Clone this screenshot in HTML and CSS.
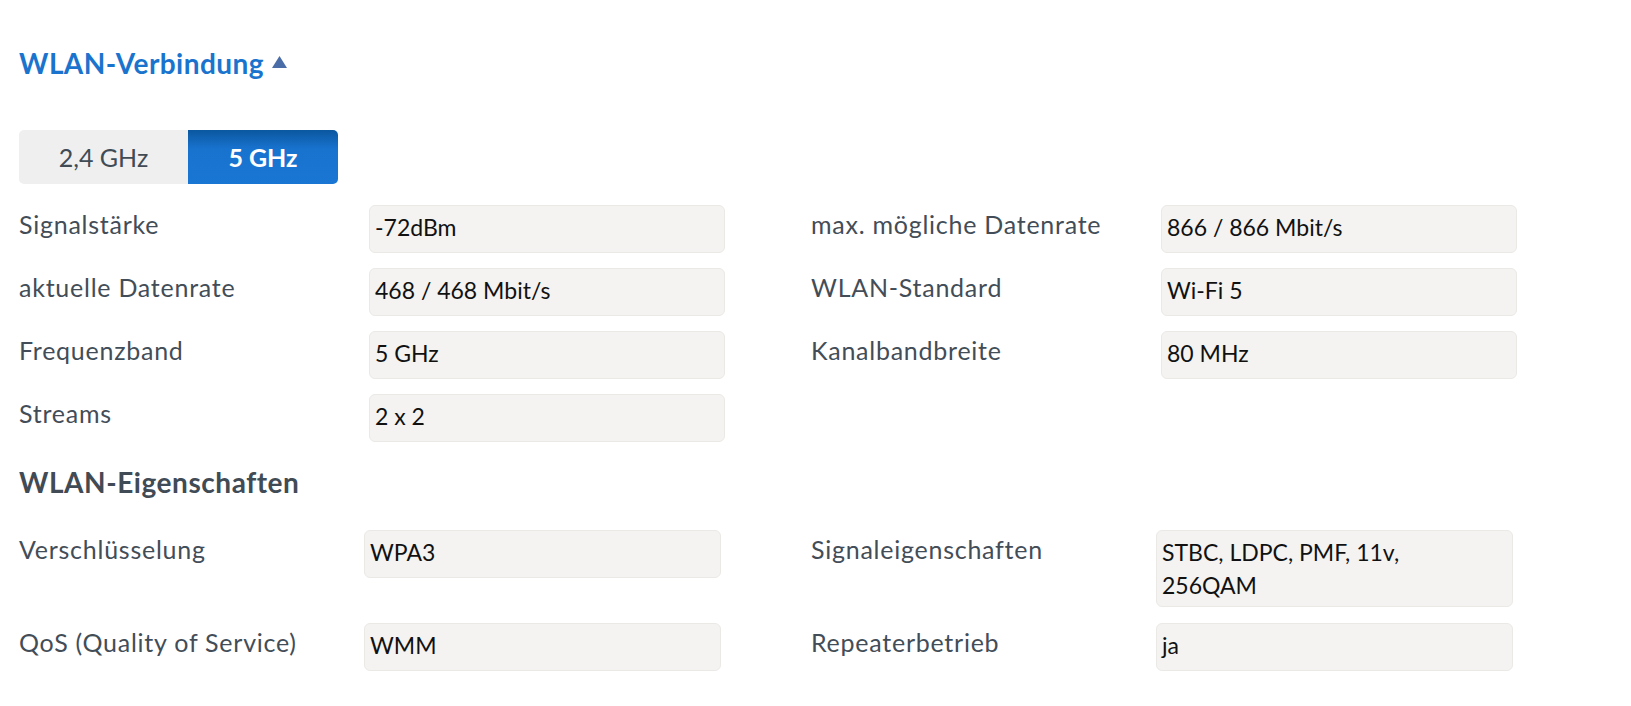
FILE: index.html
```html
<!DOCTYPE html>
<html lang="de">
<head>
<meta charset="utf-8">
<title>WLAN-Verbindung</title>
<link rel="stylesheet" href="styles.css">
</head>
<body>
<div class="page">
  <h2 class="toggle-head">WLAN-Verbindung <svg class="caret" width="15" height="12" viewBox="0 0 15 12"><polygon points="7.5,0 15,12 0,12"/></svg></h2>

  <div class="seg">
    <div class="seg-item">2,4 GHz</div>
    <div class="seg-item active">5 GHz</div>
  </div>

  <div class="fields fields-a">
    <div class="field"><div class="label">Signalstärke</div><div class="value">-72dBm</div></div>
    <div class="field"><div class="label">max. mögliche Datenrate</div><div class="value">866 / 866 Mbit/s</div></div>
    <div class="field"><div class="label">aktuelle Datenrate</div><div class="value">468 / 468 Mbit/s</div></div>
    <div class="field"><div class="label">WLAN-Standard</div><div class="value">Wi-Fi 5</div></div>
    <div class="field"><div class="label">Frequenzband</div><div class="value">5 GHz</div></div>
    <div class="field"><div class="label">Kanalbandbreite</div><div class="value">80 MHz</div></div>
    <div class="field"><div class="label">Streams</div><div class="value">2 x 2</div></div>
  </div>

  <h3 class="sub-head">WLAN-Eigenschaften</h3>

  <div class="fields fields-b">
    <div class="field"><div class="label">Verschlüsselung</div><div class="value">WPA3</div></div>
    <div class="field"><div class="label">Signaleigenschaften</div><div class="value">STBC, LDPC, PMF, 11v,<br>256QAM</div></div>
    <div class="field"><div class="label">QoS (Quality of Service)</div><div class="value">WMM</div></div>
    <div class="field"><div class="label">Repeaterbetrieb</div><div class="value">ja</div></div>
  </div>
</div>
</body>
</html>
```
FILE: styles.css
```css
html, body {
  margin: 0;
  padding: 0;
  background: #ffffff;
}

body {
  font-family: "Lato", "Liberation Sans", sans-serif;
  color: #414b55;
}

.page {
  padding: 46px 0 0 19px;
}

.toggle-head {
  margin: 0;
  font-size: 28px;
  line-height: 34px;
  font-weight: 700;
  letter-spacing: 0.45px;
  color: #1a74cd;
  display: flex;
  align-items: center;
  gap: 8px;
}

.caret {
  fill: #4a6da7;
  margin-top: -3px;
}

.seg {
  margin-top: 50px;
  display: flex;
  width: 319px;
  height: 54px;
}

.seg-item {
  font-size: 25px;
  line-height: 54px;
  text-align: center;
  color: #414b55;
  background: #efefef;
  width: 169px;
  border-radius: 5px 0 0 5px;
}

.seg-item.active {
  width: 150px;
  color: #ffffff;
  font-weight: 700;
  background: linear-gradient(#0b579f 0%, #1873cf 35%, #1976d2 100%);
  border-radius: 0 5px 5px 0;
}

.fields {
  display: grid;
}

.fields-a {
  margin-top: 21px;
  grid-template-columns: 706px 707px;
  column-gap: 86px;
  row-gap: 15px;
}

.fields-a .field {
  display: grid;
  grid-template-columns: 350px 356px;
}

.fields-b {
  margin-top: 31px;
  grid-template-columns: 702px 702px;
  column-gap: 90px;
  row-gap: 16px;
}

.fields-b .field {
  display: grid;
  grid-template-columns: 345px 357px;
  align-items: start;
}

.label {
  font-size: 25px;
  line-height: 33px;
  letter-spacing: 0.75px;
  padding-top: 3px;
  color: #434d57;
}

.value {
  box-sizing: border-box;
  min-height: 48px;
  padding: 5px 5px 4px;
  font-size: 23px;
  line-height: 33px;
  color: #111111;
  background: #f4f3f1;
  border: 1px solid #ebe9e6;
  border-radius: 6px;
}

.sub-head {
  margin: 23px 0 0;
  font-size: 28px;
  line-height: 34px;
  font-weight: 700;
  letter-spacing: 0.55px;
  color: #414b55;
}
```
